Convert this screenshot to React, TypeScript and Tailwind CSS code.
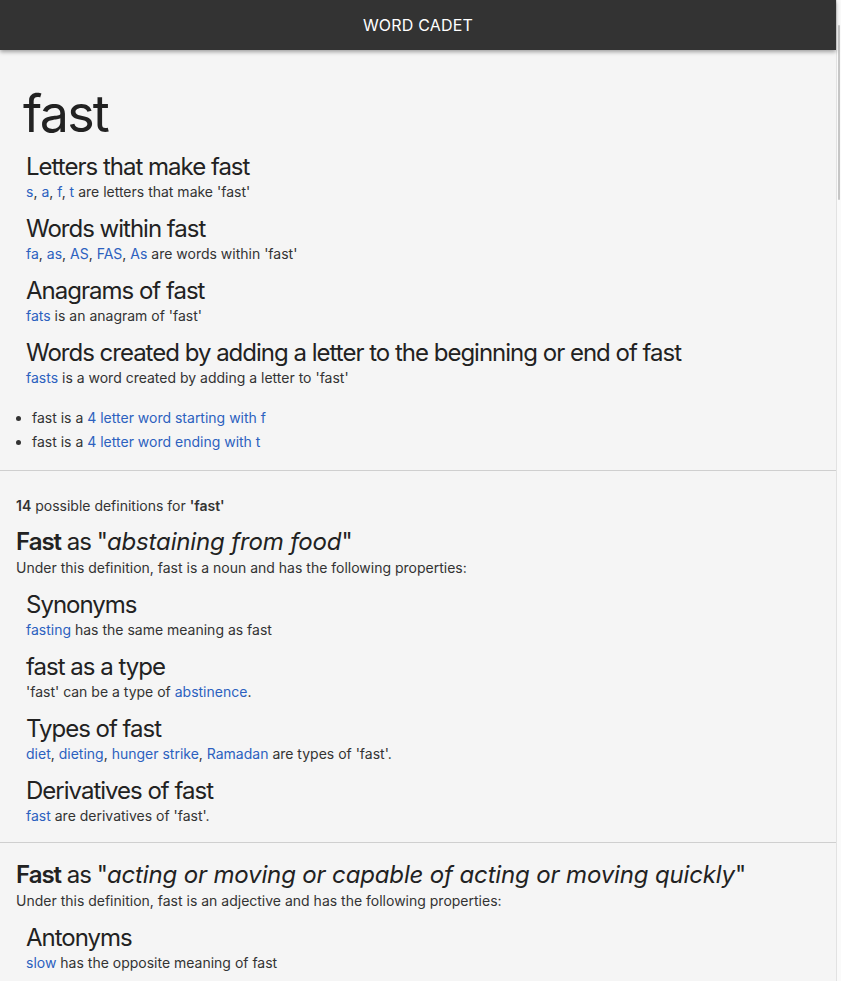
import React from "react";

type Part = string | { link: string };

const L = ({ children }: { children: React.ReactNode }) => (
  <a className="text-[#2c61bf]">{children}</a>
);

function Line({ parts }: { parts: Part[] }) {
  return (
    <p className="text-[14px] leading-[20px] text-[#333]">
      {parts.map((p, i) =>
        typeof p === "string" ? <span key={i}>{p}</span> : <L key={i}>{p.link}</L>
      )}
    </p>
  );
}

function joinLinks(words: string[]): Part[] {
  const out: Part[] = [];
  words.forEach((w, i) => {
    if (i > 0) out.push(", ");
    out.push({ link: w });
  });
  return out;
}

function Sub({ title, parts }: { title: string; parts: Part[] }) {
  return (
    <div className="pl-[10px] mb-[12px]">
      <h3 className="text-[24px] leading-[30px] tracking-[-1px] text-[#222]">{title}</h3>
      <Line parts={parts} />
    </div>
  );
}

function Definition({
  meaning,
  pos,
  children,
}: {
  meaning: string;
  pos: string;
  children: React.ReactNode;
}) {
  return (
    <div>
      <h2 className="text-[24px] leading-[32px] tracking-[-1px] text-[#222]">
        <span className="font-semibold">Fast</span> as "
        <i className="tracking-[-0.15px]">{meaning}</i>"
      </h2>
      <p className="text-[14px] leading-[20px] text-[#333] mb-[12px]">
        Under this definition, fast is {pos} and has the following properties:
      </p>
      {children}
    </div>
  );
}

export default function App() {
  return (
    <div
      className="flex h-[981px] overflow-hidden bg-[#f5f5f5]"
      style={{ fontFamily: "Inter, 'Noto Sans', sans-serif" }}
    >
      <div className="w-[836px] shrink-0">
        <header className="h-[50px] bg-[#333] flex items-center justify-center shadow-[0_2px_4px_rgba(0,0,0,0.35)] relative">
          <span className="text-white text-[16px] tracking-[0.2px]">WORD CADET</span>
        </header>

        <section className="pl-[16px] pt-[38px]">
          <h1 className="pl-[7px] text-[52px] leading-[52px] tracking-[-1.75px] text-[#222] mb-[12px]">
            fast
          </h1>
          <Sub
            title="Letters that make fast"
            parts={[...joinLinks(["s", "a", "f", "t"]), " are letters that make 'fast'"]}
          />
          <Sub
            title="Words within fast"
            parts={[...joinLinks(["fa", "as", "AS", "FAS", "As"]), " are words within 'fast'"]}
          />
          <Sub
            title="Anagrams of fast"
            parts={[{ link: "fats" }, " is an anagram of 'fast'"]}
          />
          <Sub
            title="Words created by adding a letter to the beginning or end of fast"
            parts={[{ link: "fasts" }, " is a word created by adding a letter to 'fast'"]}
          />
          <ul className="pt-[6px] pb-[16px] text-[14px] leading-[24px] text-[#333]">
            <li className="flex items-center">
              <span className="w-[5px] h-[5px] rounded-full bg-[#333] mr-[11px]" />
              <span>
                fast is a <L>4 letter word starting with f</L>
              </span>
            </li>
            <li className="flex items-center">
              <span className="w-[5px] h-[5px] rounded-full bg-[#333] mr-[11px]" />
              <span>
                fast is a <L>4 letter word ending with t</L>
              </span>
            </li>
          </ul>
        </section>

        <hr className="border-0 border-t border-[#cfcfcf]" />

        <section className="pl-[16px] pt-[25px]">
          <p className="text-[14px] leading-[20px] text-[#333] mb-[10px]">
            <b className="font-semibold">14</b> possible definitions for{" "}
            <b className="font-semibold">'fast'</b>
          </p>
          <Definition meaning="abstaining from food" pos="a noun">
            <Sub title="Synonyms" parts={[{ link: "fasting" }, " has the same meaning as fast"]} />
            <Sub
              title="fast as a type"
              parts={["'fast' can be a type of ", { link: "abstinence" }, "."]}
            />
            <Sub
              title="Types of fast"
              parts={[
                ...joinLinks(["diet", "dieting", "hunger strike", "Ramadan"]),
                " are types of 'fast'.",
              ]}
            />
            <Sub title="Derivatives of fast" parts={[{ link: "fast" }, " are derivatives of 'fast'."]} />
          </Definition>
          <div className="h-[4px]" />
        </section>

        <hr className="border-0 border-t border-[#cfcfcf]" />

        <section className="pl-[16px] pt-[16px]">
          <Definition meaning="acting or moving or capable of acting or moving quickly" pos="an adjective">
            <Sub title="Antonyms" parts={[{ link: "slow" }, " has the opposite meaning of fast"]} />
          </Definition>
        </section>
      </div>
      <div className="w-[5px] shrink-0 bg-[#fafafa] border-l border-[#e2e2e2] pl-[1px]">
        <div className="w-[2px] h-[175px] mt-[25px] bg-[#c6c6c6] rounded-full" />
      </div>
    </div>
  );
}
